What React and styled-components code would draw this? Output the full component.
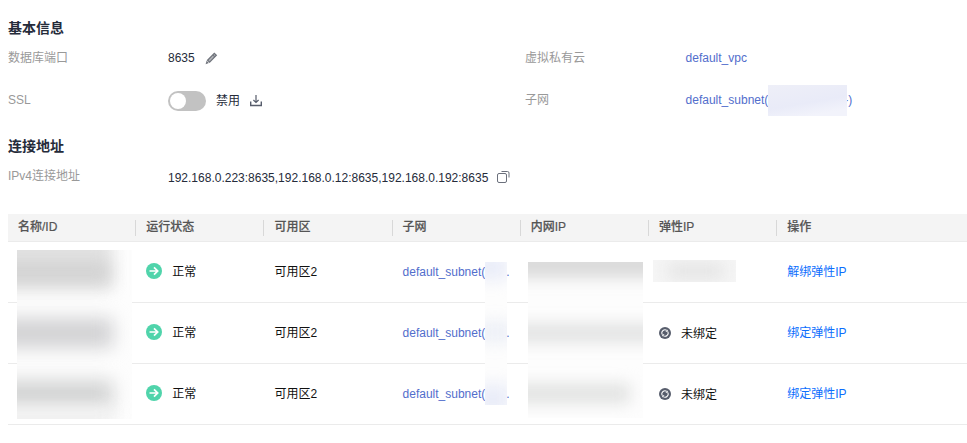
import React from "react";
import styled, { createGlobalStyle } from "styled-components";

const GlobalStyle = createGlobalStyle`
  body {
    margin: 0;
    background: #fff;
    color: #252b3a;
    font-family: "Liberation Sans", "Noto Sans CJK SC", sans-serif;
    font-size: 12px;
    line-height: 18px;
    overflow: hidden;
  }
`;

const Page = styled.main`
  height: 443px;
  padding: 18px 0 0 8px;
  box-sizing: border-box;
`;

const Title = styled.h2`
  margin: ${({ $top }) => $top || 0}px 0 0;
  font-size: 14px;
  font-weight: 700;
  line-height: 20px;
`;

const InfoRow = styled.div`
  display: grid;
  grid-template-columns: 160px 357px 160.6px 1fr;
  align-items: center;
  height: ${({ $h }) => $h}px;
`;

const Label = styled.span`
  color: #999;
  padding-bottom: ${({ $raise }) => $raise || 0}px;
`;

const Value = styled.div`
  display: flex;
  align-items: center;
  padding-top: ${({ $drop }) => $drop || 0}px;
  white-space: nowrap;

  svg {
    flex: none;
    margin-left: ${({ $gap }) => $gap || 10}px;
  }
`;

const Link = styled.a`
  color: ${({ $bright }) => ($bright ? "#0d6efd" : "#526ecc")};
  cursor: pointer;
`;

const Toggle = styled.span`
  display: flex;
  width: 38px;
  height: 20px;
  padding: 2px;
  margin-right: 10px;
  box-sizing: border-box;
  border-radius: 10px;
  background: #c2c2c2;

  &::before {
    content: "";
    width: 16px;
    height: 16px;
    border-radius: 50%;
    background: #fff;
  }
`;

const Table = styled.section`
  position: relative;
  margin-top: 18px;
`;

const Row = styled.div`
  display: grid;
  grid-template-columns: repeat(6, 128.2px) 1fr;
  align-items: center;
  height: 61px;
  box-sizing: border-box;
  border-bottom: 1px solid #ebebeb;
`;

const HeadRow = styled(Row)`
  height: 28px;
  background: #f4f4f4;
  color: #555;
  font-weight: 500;
  -webkit-text-stroke: 0.2px #555;
`;

const HeadCell = styled.div`
  height: 16px;
  padding-left: 10px;
  line-height: 14px;
  box-sizing: border-box;
  border-right: 1px solid #d8d8d8;

  &:last-child {
    border-right: 0;
  }
`;

const Cell = styled.div`
  display: flex;
  align-items: center;
  gap: 10px;
  padding: ${({ $drop }) => $drop || 0}px 0 0 10px;
  color: #111;
  white-space: nowrap;

  svg {
    flex: none;
    margin-bottom: 2px;
  }
`;

const Ellipsis = styled(Link)`
  display: flex;
  justify-content: space-between;
  width: 107px;
`;

const Mask = styled.div`
  position: absolute;
  left: ${({ $x }) => $x}px;
  top: ${({ $y }) => $y}px;
  width: ${({ $w }) => $w}px;
  height: ${({ $h }) => $h}px;
  background: ${({ $bg }) => $bg || "#fdfdfd"};
  overflow: hidden;
`;

const Smudge = styled.div`
  position: absolute;
  left: ${({ $x }) => $x}px;
  top: ${({ $y }) => $y}px;
  width: ${({ $w }) => $w}px;
  height: ${({ $h }) => $h}px;
  background: ${({ $color }) => $color};
  filter: blur(${({ $blur }) => $blur || 8}px);
`;

const SubnetMask = styled.span`
  position: relative;
  width: 79px;
  height: 31px;
  margin: 0 -3px -1px 0;
  background: linear-gradient(170deg, #eeeff8 0%, #e9ebf8 55%, #f2f3fb 85%);
`;

const PencilIcon = () => (
  <svg width="13" height="13" viewBox="0 0 13 13" fill="none" stroke="#70747c">
    <path
      d="M2.6 8.2 9.3 1.3l2 1.9-6.7 6.9z"
      fill="#b4b6ba"
      strokeWidth="1.3"
    />
    <path d="m7.8 2.8 2 2" strokeWidth="1.1" />
    <path d="M1.6 8.8.6 12.2l3.3-1.1z" fill="#70747c" stroke="none" />
  </svg>
);

const DownloadIcon = () => (
  <svg width="12" height="12" viewBox="0 0 12 12" fill="none" stroke="#575d6c">
    <path d="M6 0v7.2M3.4 5 6 7.5 8.6 5" strokeWidth="1.2" />
    <path d="M.7 6.5v4h10.6v-4" strokeWidth="1.4" />
  </svg>
);

const CopyIcon = () => (
  <svg width="14" height="13" viewBox="0 0 14 13" fill="none" stroke="#6b707c">
    <rect x="1.5" y="2.5" width="9" height="9" rx="1.5" />
    <path d="M5.5.5h6a1.5 1.5 0 0 1 1.5 1.5v4.5" />
  </svg>
);

const NormalIcon = () => (
  <svg width="16" height="16" viewBox="0 0 16 16" fill="none">
    <circle cx="8" cy="8" r="8" fill="#50d4ab" />
    <path d="M3.5 8h8M8 4.3 11.7 8 8 11.7" stroke="#fff" strokeWidth="1.7" />
  </svg>
);

const UnboundIcon = () => (
  <svg width="12" height="12" viewBox="0 0 12 12" fill="none">
    <circle cx="6" cy="6" r="6" fill="#575d6c" />
    <path
      d="M3 7.2A3.2 3.2 0 0 1 7.8 3.4M9 4.8a3.2 3.2 0 0 1-4.8 3.8"
      stroke="#fff"
      strokeWidth="1.1"
    />
    <path d="M6.4 4.8h2.4V2.4zM5.6 7.2H3.2v2.4z" fill="#fff" />
  </svg>
);

const columns = ["名称/ID", "运行状态", "可用区", "子网", "内网IP", "弹性IP", "操作"];

const nodes = [
  { id: 1, bound: true },
  { id: 2, bound: false },
  { id: 3, bound: false },
];

const NodeRow = ({ bound }) => (
  <Row>
    <Cell />
    <Cell>
      <NormalIcon />
      正常
    </Cell>
    <Cell>可用区2</Cell>
    <Cell>
      <Ellipsis>
        <span>default_subnet(</span>
        <span>.</span>
      </Ellipsis>
    </Cell>
    <Cell />
    <Cell $drop={2}>
      {!bound && (
        <>
          <UnboundIcon />
          未绑定
        </>
      )}
    </Cell>
    <Cell>
      <Link $bright>{bound ? "解绑弹性IP" : "绑定弹性IP"}</Link>
    </Cell>
  </Row>
);

const App = () => (
  <>
    <GlobalStyle />
    <Page>
      <Title>基本信息</Title>
      <InfoRow $h={40}>
        <Label>数据库端口</Label>
        <Value>
          8635
          <PencilIcon />
        </Value>
        <Label>虚拟私有云</Label>
        <Value>
          <Link>default_vpc</Link>
        </Value>
      </InfoRow>
      <InfoRow $h={44}>
        <Label>SSL</Label>
        <Value $drop={2}>
          <Toggle />
          禁用
          <DownloadIcon />
        </Value>
        <Label>子网</Label>
        <Value>
          <Link>default_subnet(</Link>
          <SubnetMask />
          <Link>-)</Link>
        </Value>
      </InfoRow>

      <Title $top={14}>连接地址</Title>
      <InfoRow $h={40}>
        <Label $raise={1}>IPv4连接地址</Label>
        <Value $drop={3} $gap={8}>
          192.168.0.223:8635,192.168.0.12:8635,192.168.0.192:8635
          <CopyIcon />
        </Value>
      </InfoRow>

      <Table>
        <HeadRow>
          {columns.map((name) => (
            <HeadCell key={name}>{name}</HeadCell>
          ))}
        </HeadRow>
        {nodes.map((node) => (
          <NodeRow key={node.id} bound={node.bound} />
        ))}

        {/* hidden names */}
        <Mask $x={9} $y={36} $w={115} $h={169}>
          <Smudge $x={-20} $y={-20} $w={116} $h={60} $color="#e2e2e2" />
          <Smudge $x={-20} $y={12} $w={112} $h={20} $color="#d2d2d2" />
          <Smudge $x={-20} $y={68} $w={116} $h={30} $color="#d2d2d4" $blur={9} />
          <Smudge $x={-20} $y={130} $w={116} $h={28} $color="#d3d4d4" $blur={9} />
          <Smudge $x={-20} $y={158} $w={116} $h={22} $color="#f0f0f0" />
        </Mask>

        {/* hidden subnet ranges */}
        <Mask $x={477} $y={48} $w={22} $h={143}>
          <Smudge $x={-10} $y={-8} $w={32} $h={26} $color="#e9ecf8" />
          <Smudge $x={-10} $y={60} $w={40} $h={20} $color="#eceff6" />
          <Smudge $x={-10} $y={122} $w={36} $h={30} $color="#eaedf8" />
        </Mask>

        {/* hidden private addresses */}
        <Mask $x={520} $y={48} $w={115} $h={156}>
          <Smudge $x={-20} $y={-14} $w={160} $h={30} $color="#dadada" />
          <Smudge $x={-20} $y={62} $w={160} $h={18} $color="#e0e1e1" />
          <Smudge $x={-20} $y={122} $w={122} $h={19} $color="#e0e1e0" />
        </Mask>

        {/* hidden elastic address */}
        <Mask $x={645} $y={46} $w={83} $h={22} $bg="#f5f5f5">
          <Smudge $x={16} $y={4} $w={54} $h={14} $color="#e2e2e2" />
        </Mask>
      </Table>
    </Page>
  </>
);

export default App;
